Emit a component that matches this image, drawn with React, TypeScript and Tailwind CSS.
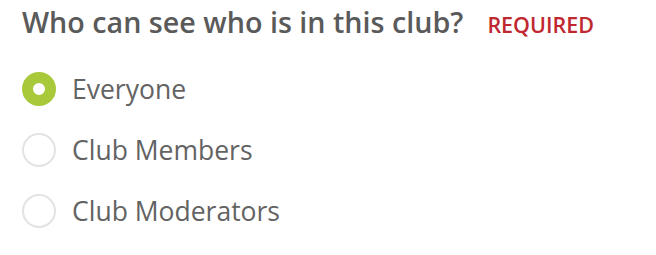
import React, { useState } from 'react';

const options = ['Everyone', 'Club Members', 'Club Moderators'];

const App: React.FC = () => {
  const [selected, setSelected] = useState('Everyone');

  return (
    <div className="w-[656px] h-[255px] bg-white pl-[22px] pt-[2px] font-['Open_Sans',sans-serif]">
      <div className="flex items-baseline">
        <h2 className="text-[28.7px] font-semibold text-[#5a5a5a] leading-[40px]">
          Who can see who is in this club?
        </h2>
        <span className="ml-[24px] text-[21.5px] font-semibold uppercase text-[#c0282f]">Required</span>
      </div>
      <div className="mt-[30px] flex flex-col gap-[27px]">
        {options.map((opt) => {
          const active = selected === opt;
          return (
            <label key={opt} className="flex items-center cursor-pointer" onClick={() => setSelected(opt)}>
              <span
                className={
                  active
                    ? 'w-[34px] h-[34px] rounded-full border-[11px] border-[#a7c93a] bg-white'
                    : 'w-[34px] h-[34px] rounded-full border-2 border-[#e3e3e3] bg-white'
                }
              />
              <span className="ml-[16px] text-[26.5px] text-[#636363] leading-[34px]">{opt}</span>
            </label>
          );
        })}
      </div>
    </div>
  );
};

export default App;
